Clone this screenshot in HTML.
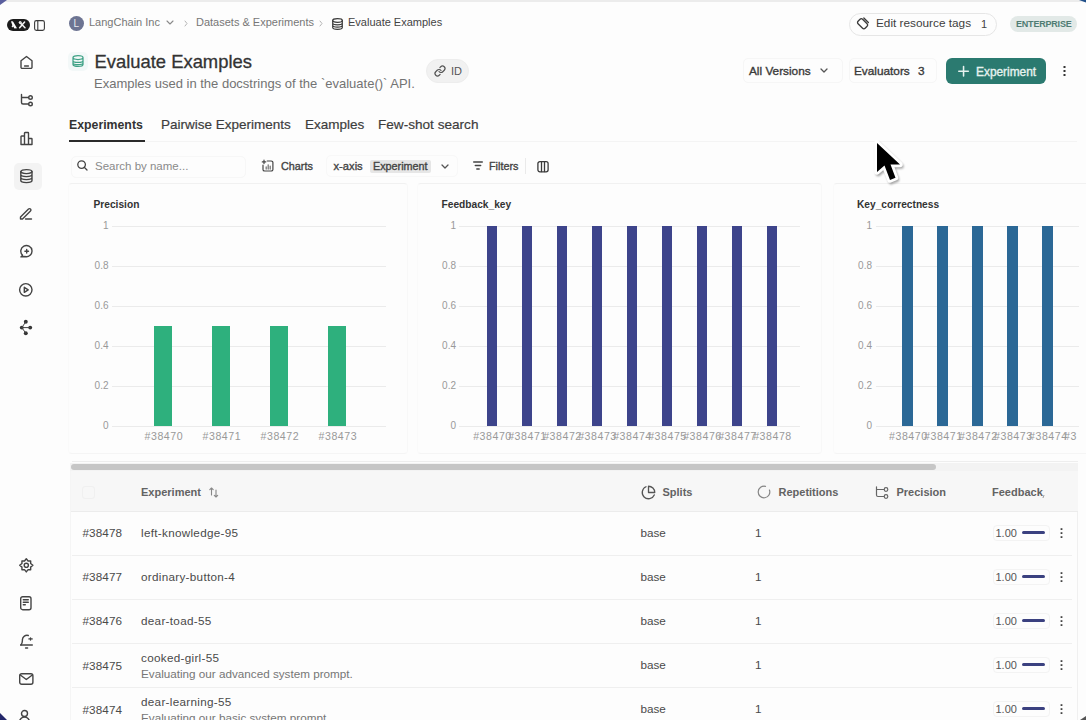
<!DOCTYPE html>
<html><head><meta charset="utf-8">
<style>
*{box-sizing:border-box;margin:0;padding:0}
html,body{width:1086px;height:720px;overflow:hidden;background:#fdfdfd;font-family:"Liberation Sans",sans-serif;color:#2b2b2b}
.a{position:absolute}
.t{position:absolute;white-space:nowrap;line-height:1}
svg{position:absolute;overflow:visible}
.ic{fill:none;stroke-linecap:round;stroke-linejoin:round}
</style></head><body>
<!-- frame -->
<div class="a" style="left:0;top:0;width:1086px;height:2px;background:#ececec"></div>
<div class="a" style="left:1077px;top:512px;width:1px;height:208px;background:#f0f0f0"></div>

<!-- top left logo -->
<div class="a" style="left:7px;top:19px;width:23px;height:12px;border-radius:6px;background:#1c1c1c"></div>
<svg style="left:7px;top:19px" width="23" height="12" viewBox="0 0 23 12">
  <path d="M4 2.6 C4.6 2.2 5.6 2.3 6.2 2.7 L10 9.3 L7.4 9.5 L6.3 7.6 L5.2 8.4 L4.6 7.2 L5.4 6.3 Z" fill="#fff"/>
  <path d="M12.6 3.2 L18 8.8 M17.6 3 L12.6 8.8" stroke="#f4f4f4" stroke-width="1.5" stroke-linecap="round"/>
  <circle cx="13.3" cy="3.6" r="1.1" fill="none" stroke="#f4f4f4" stroke-width="1"/>
</svg>
<svg style="left:34px;top:19.5px" width="11" height="11" viewBox="0 0 11 11">
  <rect x="0.6" y="0.6" width="9.8" height="9.8" rx="1.8" class="ic" stroke="#3a3a3a" stroke-width="1.1"/>
  <line x1="3.8" y1="1" x2="3.8" y2="10" class="ic" stroke="#3a3a3a" stroke-width="1.1"/>
</svg>

<!-- breadcrumb -->
<div class="a" style="left:69px;top:15.8px;width:15px;height:15px;border-radius:50%;background:#6d7492"></div>
<div class="t" style="left:73.5px;top:19px;font-size:10px;color:#e8e8f0;">L</div>
<div class="t" style="left:89px;top:17.2px;font-size:11px;color:#777">LangChain Inc</div>
<svg style="left:166px;top:20px" width="8" height="5" viewBox="0 0 8 5"><path d="M1 1 L4 4 L7 1" class="ic" stroke="#8a8a8a" stroke-width="1.1"/></svg>
<svg style="left:184px;top:20px" width="4" height="7" viewBox="0 0 4 7"><path d="M1 1 L3 3.5 L1 6" class="ic" stroke="#b5b5b5" stroke-width="1"/></svg>
<div class="t" style="left:196px;top:17.2px;font-size:11px;color:#777">Datasets &amp; Experiments</div>
<svg style="left:319px;top:20px" width="4" height="7" viewBox="0 0 4 7"><path d="M1 1 L3 3.5 L1 6" class="ic" stroke="#b5b5b5" stroke-width="1"/></svg>
<svg style="left:332px;top:17.5px" width="11" height="12" viewBox="0 0 11 12">
  <ellipse cx="5.5" cy="2.5" rx="4.8" ry="1.8" class="ic" stroke="#3a3a3a" stroke-width="1.2"/>
  <path d="M0.7 2.5 V9.5 C0.7 10.5 2.8 11.3 5.5 11.3 C8.2 11.3 10.3 10.5 10.3 9.5 V2.5 M0.7 5 C0.7 6 2.8 6.8 5.5 6.8 C8.2 6.8 10.3 6 10.3 5 M0.7 7.3 C0.7 8.3 2.8 9.1 5.5 9.1 C8.2 9.1 10.3 8.3 10.3 7.3" class="ic" stroke="#3a3a3a" stroke-width="1.2"/>
</svg>
<div class="t" style="left:348px;top:17.2px;font-size:11px;color:#444">Evaluate Examples</div>

<!-- right header -->
<div class="a" style="left:849px;top:12.5px;width:148px;height:23px;border-radius:12px;border:1px solid #e6e6e6;background:#fdfdfd"></div>
<svg style="left:856.6px;top:16.9px" width="13" height="12" viewBox="0 0 13 12">
  <g transform="rotate(-45 6 6.5)">
    <rect x="2.3" y="1.4" width="6.4" height="10" rx="1.8" class="ic" stroke="#3a3a3a" stroke-width="1.3"/>
    <path d="M10.5 3.2 V9.6" class="ic" stroke="#3a3a3a" stroke-width="1.3"/>
  </g>
</svg>
<div class="t" style="left:876px;top:17.9px;font-size:11.8px;color:#3d3d3d">Edit resource tags</div>
<div class="t" style="left:981px;top:18.5px;font-size:11px;color:#444">1</div>
<div class="a" style="left:1010px;top:16px;width:67px;height:15.5px;border-radius:8px;background:#e2e9e7"></div>
<div class="t" style="left:1016px;top:20.3px;font-size:9px;font-weight:700;color:#4f7c73;letter-spacing:-0.2px">ENTERPRISE</div>

<!-- title -->
<div class="a" style="left:68px;top:51.5px;width:19.5px;height:19px;border-radius:5px;background:#f3f8f8"></div>
<svg style="left:72.3px;top:55.3px" width="12" height="12" viewBox="0 0 12 12">
  <path d="M1 2.6 C1 1.4 3.2 0.7 6 0.7 C8.8 0.7 11 1.4 11 2.6 V9.4 C11 10.6 8.8 11.3 6 11.3 C3.2 11.3 1 10.6 1 9.4 Z M1 2.6 C1 3.8 3.2 4.5 6 4.5 C8.8 4.5 11 3.8 11 2.6 M1 5.7 C1 6.8 3.2 7.4 6 7.4 C8.8 7.4 11 6.8 11 5.7 M1 8.1 C1 9.1 3.2 9.7 6 9.7 C8.8 9.7 11 9.1 11 8.1" fill="none" stroke="#3fa286" stroke-width="1.25"/>
</svg>
<div class="t" style="left:94.5px;top:52.7px;font-size:18.4px;color:#333;-webkit-text-stroke:0.3px #333">Evaluate Examples</div>
<div class="t" style="left:94px;top:77px;font-size:13px;color:#737373">Examples used in the docstrings of the `evaluate()` API.</div>
<div class="a" style="left:426px;top:59px;width:43px;height:24px;border-radius:12px;background:#f1f1f1;border:1px solid #ededed"></div>
<svg style="left:433.5px;top:64.5px" width="12" height="12" viewBox="0 0 24 24">
  <path d="M10 13a5 5 0 0 0 7.54.54l3-3a5 5 0 0 0-7.07-7.07l-1.72 1.71" class="ic" stroke="#555" stroke-width="2.4"/>
  <path d="M14 11a5 5 0 0 0-7.54-.54l-3 3a5 5 0 0 0 7.07 7.07l1.71-1.71" class="ic" stroke="#555" stroke-width="2.4"/>
</svg>
<div class="t" style="left:451px;top:66px;font-size:11px;color:#555">ID</div>

<!-- actions -->
<div class="a" style="left:743px;top:58px;width:100px;height:25px;border-radius:5px;border:1px solid #f6f6f6"></div>
<div class="t" style="left:749px;top:65.5px;font-size:11.8px;color:#3a3a3a;-webkit-text-stroke:0.35px #3a3a3a">All Versions</div>
<svg style="left:820px;top:68px" width="8" height="5" viewBox="0 0 8 5"><path d="M1 1 L4 4 L7 1" class="ic" stroke-width="1.3" stroke="#555"/></svg>
<div class="a" style="left:849px;top:58px;width:88px;height:25px;border-radius:5px;border:1px solid #f6f6f6"></div>
<div class="t" style="left:854px;top:65.5px;font-size:11.8px;color:#3a3a3a;-webkit-text-stroke:0.35px #3a3a3a">Evaluators</div>
<div class="t" style="left:918px;top:65.5px;font-size:11.8px;color:#3a3a3a;-webkit-text-stroke:0.35px #3a3a3a">3</div>
<div class="a" style="left:946px;top:58px;width:100px;height:25.5px;border-radius:6px;background:#2b7a70"></div>
<svg style="left:958px;top:66px" width="10" height="10" viewBox="0 0 9 9"><path d="M5 0.5 V9 M0.7 4.75 H9.3" stroke="#e6f2ef" stroke-width="1.4" stroke-linecap="round"/></svg>
<div class="t" style="left:976px;top:66.5px;font-size:11.9px;color:#e6f2ef;-webkit-text-stroke:0.35px #e6f2ef">Experiment</div>
<svg style="left:1063px;top:66px" width="3" height="11" viewBox="0 0 3 11"><rect x="0.5" y="0" width="2" height="2" fill="#333"/><rect x="0.5" y="4" width="2" height="2" fill="#333"/><rect x="0.5" y="8" width="2" height="2" fill="#333"/></svg>

<!-- tabs -->
<div class="t" style="left:69px;top:118.8px;font-size:12.3px;font-weight:700;color:#333">Experiments</div>
<div class="a" style="left:145px;top:141px;width:932px;height:1px;background:#f4f4f4"></div>
<div class="a" style="left:69px;top:140px;width:76px;height:2px;background:#2b2b2b"></div>
<div class="t" style="left:161px;top:118.3px;font-size:13.5px;color:#3d3d3d;-webkit-text-stroke:0.2px #3d3d3d">Pairwise Experiments</div>
<div class="t" style="left:305px;top:118.3px;font-size:13.5px;color:#3d3d3d;-webkit-text-stroke:0.2px #3d3d3d">Examples</div>
<div class="t" style="left:378px;top:118.3px;font-size:13.6px;color:#3d3d3d;-webkit-text-stroke:0.2px #3d3d3d">Few-shot search</div>

<!-- toolbar -->
<div class="a" style="left:71px;top:155.5px;width:175px;height:22px;border-radius:5px;border:1px solid #f7f7f7"></div>
<svg style="left:77px;top:160px" width="11" height="11" viewBox="0 0 11 11"><circle cx="4.6" cy="4.6" r="3.8" class="ic" stroke="#444" stroke-width="1.3"/><path d="M7.5 7.5 L10 10" class="ic" stroke="#444" stroke-width="1.3"/></svg>
<div class="t" style="left:95px;top:161px;font-size:11.5px;color:#8a8a8a">Search by name...</div>
<svg style="left:261.5px;top:160.3px" width="12" height="12" viewBox="0 0 12 12">
  <path d="M5.2 1 H9.3 A1.6 1.6 0 0 1 10.9 2.6 V9.4 A1.6 1.6 0 0 1 9.3 11 H2.6 A1.6 1.6 0 0 1 1 9.4 V5.2" class="ic" stroke="#444" stroke-width="1.2"/>
  <path d="M2 0.2 V3.6 M0.3 1.9 H3.7" class="ic" stroke="#444" stroke-width="1.2"/>
  <path d="M4.2 9 V7 M6.2 9 V4.8 M8.2 9 V6.2" class="ic" stroke="#777" stroke-width="1.3"/>
</svg>
<div class="t" style="left:281px;top:161px;font-size:10.8px;color:#444;-webkit-text-stroke:0.35px #444">Charts</div>
<div class="a" style="left:326px;top:155px;width:132px;height:22px;border-radius:5px;border:1px solid #f8f8f8"></div>
<div class="t" style="left:333.5px;top:161px;font-size:11.2px;color:#444;-webkit-text-stroke:0.35px #444">x-axis</div>
<div class="a" style="left:370px;top:159.5px;width:61px;height:13px;border-radius:2px;background:#e6e6e6"></div>
<div class="t" style="left:373px;top:161px;font-size:10.8px;color:#444;-webkit-text-stroke:0.35px #444">Experiment</div>
<svg style="left:441px;top:164px" width="8" height="5" viewBox="0 0 8 5"><path d="M1 1 L4 4 L7 1" class="ic" stroke-width="1.3" stroke="#555"/></svg>
<svg style="left:473px;top:161px" width="10" height="9" viewBox="0 0 10 9"><path d="M0.7 1 H9.3 M2.3 4.5 H7.7 M3.8 8 H6.2" class="ic" stroke="#444" stroke-width="1.4"/></svg>
<div class="t" style="left:489px;top:161px;font-size:10.8px;color:#444;-webkit-text-stroke:0.35px #444">Filters</div>
<div class="a" style="left:525px;top:158px;width:1px;height:16px;background:#eaeaea"></div>
<svg style="left:536.5px;top:160.5px" width="12" height="11" viewBox="0 0 12 11"><rect x="0.9" y="0.6" width="10.2" height="10.2" rx="2" class="ic" stroke="#3a3a3a" stroke-width="1.3"/><path d="M4.5 1 V10.5 M7.5 1 V10.5" class="ic" stroke="#3a3a3a" stroke-width="1.3"/></svg>

<!-- CHARTS -->
<div class="a" style="left:68px;top:183px;width:340px;height:271px;border:1px solid #f1f1f1;border-left-color:#fafafa;border-right-color:#f8f8f8;border-bottom-color:#f5f5f5;border-radius:4px"></div>
<div class="t" style="left:93.5px;top:199.8px;font-size:10.2px;font-weight:700;color:#333">Precision</div>
<div class="a" style="left:112px;top:225.5px;width:274px;height:1px;background:#ebebeb"></div>
<div class="t" style="right:977.5px;top:221px;font-size:10px;color:#999">1</div>
<div class="a" style="left:112px;top:265.5px;width:274px;height:1px;background:#ebebeb"></div>
<div class="t" style="right:977.5px;top:261px;font-size:10px;color:#999">0.8</div>
<div class="a" style="left:112px;top:305.5px;width:274px;height:1px;background:#ebebeb"></div>
<div class="t" style="right:977.5px;top:301px;font-size:10px;color:#999">0.6</div>
<div class="a" style="left:112px;top:345.5px;width:274px;height:1px;background:#ebebeb"></div>
<div class="t" style="right:977.5px;top:341px;font-size:10px;color:#999">0.4</div>
<div class="a" style="left:112px;top:385.5px;width:274px;height:1px;background:#ebebeb"></div>
<div class="t" style="right:977.5px;top:381px;font-size:10px;color:#999">0.2</div>
<div class="a" style="left:112px;top:425.5px;width:274px;height:1px;background:#ebebeb"></div>
<div class="t" style="right:977.5px;top:421px;font-size:10px;color:#999">0</div>
<div class="a" style="left:154px;top:326.0px;width:18px;height:100.0px;background:#2eb07d"></div>
<div class="a" style="left:212px;top:326.0px;width:18px;height:100.0px;background:#2eb07d"></div>
<div class="a" style="left:270px;top:326.0px;width:18px;height:100.0px;background:#2eb07d"></div>
<div class="a" style="left:328px;top:326.0px;width:18px;height:100.0px;background:#2eb07d"></div>
<div class="t" style="left:144.5px;top:430.8px;font-size:10.6px;color:#999;letter-spacing:0.55px">#38470</div>
<div class="t" style="left:202.5px;top:430.8px;font-size:10.6px;color:#999;letter-spacing:0.55px">#38471</div>
<div class="t" style="left:260.5px;top:430.8px;font-size:10.6px;color:#999;letter-spacing:0.55px">#38472</div>
<div class="t" style="left:318.5px;top:430.8px;font-size:10.6px;color:#999;letter-spacing:0.55px">#38473</div>
<div class="a" style="left:417px;top:183px;width:405px;height:271px;border:1px solid #f1f1f1;border-left-color:#fafafa;border-right-color:#f8f8f8;border-bottom-color:#f5f5f5;border-radius:4px"></div>
<div class="t" style="left:441.5px;top:199.8px;font-size:10.2px;font-weight:700;color:#333">Feedback_key</div>
<div class="a" style="left:459px;top:225.5px;width:341px;height:1px;background:#ebebeb"></div>
<div class="t" style="right:630px;top:221px;font-size:10px;color:#999">1</div>
<div class="a" style="left:459px;top:265.5px;width:341px;height:1px;background:#ebebeb"></div>
<div class="t" style="right:630px;top:261px;font-size:10px;color:#999">0.8</div>
<div class="a" style="left:459px;top:305.5px;width:341px;height:1px;background:#ebebeb"></div>
<div class="t" style="right:630px;top:301px;font-size:10px;color:#999">0.6</div>
<div class="a" style="left:459px;top:345.5px;width:341px;height:1px;background:#ebebeb"></div>
<div class="t" style="right:630px;top:341px;font-size:10px;color:#999">0.4</div>
<div class="a" style="left:459px;top:385.5px;width:341px;height:1px;background:#ebebeb"></div>
<div class="t" style="right:630px;top:381px;font-size:10px;color:#999">0.2</div>
<div class="a" style="left:459px;top:425.5px;width:341px;height:1px;background:#ebebeb"></div>
<div class="t" style="right:630px;top:421px;font-size:10px;color:#999">0</div>
<div class="a" style="left:486.5px;top:226.0px;width:10.3px;height:200.0px;background:#3d448b"></div>
<div class="a" style="left:521.5px;top:226.0px;width:10.3px;height:200.0px;background:#3d448b"></div>
<div class="a" style="left:556.5px;top:226.0px;width:10.3px;height:200.0px;background:#3d448b"></div>
<div class="a" style="left:591.5px;top:226.0px;width:10.3px;height:200.0px;background:#3d448b"></div>
<div class="a" style="left:626.5px;top:226.0px;width:10.3px;height:200.0px;background:#3d448b"></div>
<div class="a" style="left:661.5px;top:226.0px;width:10.3px;height:200.0px;background:#3d448b"></div>
<div class="a" style="left:696.5px;top:226.0px;width:10.3px;height:200.0px;background:#3d448b"></div>
<div class="a" style="left:731.5px;top:226.0px;width:10.3px;height:200.0px;background:#3d448b"></div>
<div class="a" style="left:766.5px;top:226.0px;width:10.3px;height:200.0px;background:#3d448b"></div>
<div class="t" style="left:473.15px;top:430.8px;font-size:10.6px;color:#999;letter-spacing:0.55px">#38470</div>
<div class="t" style="left:508.15px;top:430.8px;font-size:10.6px;color:#999;letter-spacing:0.55px">#38471</div>
<div class="t" style="left:543.15px;top:430.8px;font-size:10.6px;color:#999;letter-spacing:0.55px">#38472</div>
<div class="t" style="left:578.15px;top:430.8px;font-size:10.6px;color:#999;letter-spacing:0.55px">#38473</div>
<div class="t" style="left:613.15px;top:430.8px;font-size:10.6px;color:#999;letter-spacing:0.55px">#38474</div>
<div class="t" style="left:648.15px;top:430.8px;font-size:10.6px;color:#999;letter-spacing:0.55px">#38475</div>
<div class="t" style="left:683.15px;top:430.8px;font-size:10.6px;color:#999;letter-spacing:0.55px">#38476</div>
<div class="t" style="left:718.15px;top:430.8px;font-size:10.6px;color:#999;letter-spacing:0.55px">#38477</div>
<div class="t" style="left:753.15px;top:430.8px;font-size:10.6px;color:#999;letter-spacing:0.55px">#38478</div>
<div class="a" style="left:833px;top:183px;width:267px;height:271px;border:1px solid #f1f1f1;border-left-color:#fafafa;border-right-color:#f8f8f8;border-bottom-color:#f5f5f5;border-radius:4px"></div>
<div class="t" style="left:857px;top:199.8px;font-size:10.2px;font-weight:700;color:#333">Key_correctness</div>
<div class="a" style="left:876px;top:225.5px;width:203px;height:1px;background:#ebebeb"></div>
<div class="t" style="right:214px;top:221px;font-size:10px;color:#999">1</div>
<div class="a" style="left:876px;top:265.5px;width:203px;height:1px;background:#ebebeb"></div>
<div class="t" style="right:214px;top:261px;font-size:10px;color:#999">0.8</div>
<div class="a" style="left:876px;top:305.5px;width:203px;height:1px;background:#ebebeb"></div>
<div class="t" style="right:214px;top:301px;font-size:10px;color:#999">0.6</div>
<div class="a" style="left:876px;top:345.5px;width:203px;height:1px;background:#ebebeb"></div>
<div class="t" style="right:214px;top:341px;font-size:10px;color:#999">0.4</div>
<div class="a" style="left:876px;top:385.5px;width:203px;height:1px;background:#ebebeb"></div>
<div class="t" style="right:214px;top:381px;font-size:10px;color:#999">0.2</div>
<div class="a" style="left:876px;top:425.5px;width:203px;height:1px;background:#ebebeb"></div>
<div class="t" style="right:214px;top:421px;font-size:10px;color:#999">0</div>
<div class="a" style="left:902.4px;top:226.0px;width:10.2px;height:200.0px;background:#2b6896"></div>
<div class="a" style="left:937.4px;top:226.0px;width:10.2px;height:200.0px;background:#2b6896"></div>
<div class="a" style="left:972.4px;top:226.0px;width:10.2px;height:200.0px;background:#2b6896"></div>
<div class="a" style="left:1007.4px;top:226.0px;width:10.2px;height:200.0px;background:#2b6896"></div>
<div class="a" style="left:1042.4px;top:226.0px;width:10.2px;height:200.0px;background:#2b6896"></div>
<div class="t" style="left:889.0px;top:430.8px;font-size:10.6px;color:#999;letter-spacing:0.55px">#38470</div>
<div class="t" style="left:924.0px;top:430.8px;font-size:10.6px;color:#999;letter-spacing:0.55px">#38471</div>
<div class="t" style="left:959.0px;top:430.8px;font-size:10.6px;color:#999;letter-spacing:0.55px">#38472</div>
<div class="t" style="left:994.0px;top:430.8px;font-size:10.6px;color:#999;letter-spacing:0.55px">#38473</div>
<div class="t" style="left:1029.0px;top:430.8px;font-size:10.6px;color:#999;letter-spacing:0.55px">#38474</div>
<div class="t" style="left:1064.0px;top:430.8px;font-size:10.6px;color:#999;letter-spacing:0.55px">#3</div>

<!-- sidebar -->
<div class="a" style="left:14px;top:163px;width:28px;height:26.5px;border-radius:5px;background:#f3f3f3"></div>
<svg style="left:19.7px;top:56.3px" width="14" height="14" viewBox="0 0 14 14"><path d="M1 4.8 L6.5 0.5 L12 4.8 V11.2 A1.2 1.2 0 0 1 10.8 12.4 H2.2 A1.2 1.2 0 0 1 1 11.2 Z" class="ic" stroke="#444" stroke-width="1.4"/><path d="M4.6 10 H8.4" class="ic" stroke="#444" stroke-width="1.4"/></svg>
<svg style="left:19.7px;top:94.2px" width="14" height="14" viewBox="0 0 14 14"><path d="M1.5 0.5 V8.5 A1.5 1.5 0 0 0 3 10 H8.5 M1.5 3.5 H8.5" class="ic" stroke="#444" stroke-width="1.4"/><circle cx="10.5" cy="3.5" r="1.8" class="ic" stroke="#444" stroke-width="1.4"/><circle cx="10.5" cy="10" r="1.8" class="ic" stroke="#444" stroke-width="1.4"/></svg>
<svg style="left:19.9px;top:132px" width="14" height="14" viewBox="0 0 14 14"><path d="M1 12.5 V4.5 A0.5 0.5 0 0 1 1.5 4 H4.5 V1 A0.5 0.5 0 0 1 5 0.5 H8 A0.5 0.5 0 0 1 8.5 1 V6.5 H11.5 A0.5 0.5 0 0 1 12 7 V12.5 Z M4.5 4 V12.5 M8.5 6.5 V12.5" class="ic" stroke="#444" stroke-width="1.4"/></svg>
<svg style="left:19.8px;top:169.3px" width="14" height="15" viewBox="0 0 14 15"><ellipse cx="6.4" cy="2.6" rx="5.6" ry="2" class="ic" stroke="#444" stroke-width="1.4"/><path d="M0.8 2.6 V11.6 C0.8 12.7 3.3 13.6 6.4 13.6 C9.5 13.6 12 12.7 12 11.6 V2.6 M0.8 5.6 C0.8 6.7 3.3 7.6 6.4 7.6 C9.5 7.6 12 6.7 12 5.6 M0.8 8.6 C0.8 9.7 3.3 10.6 6.4 10.6 C9.5 10.6 12 9.7 12 8.6" class="ic" stroke="#444" stroke-width="1.4"/></svg>
<svg style="left:19.3px;top:206.8px" width="14" height="14" viewBox="0 0 14 14"><path d="M1.5 10 L9.5 2 A1.4 1.4 0 0 1 11.5 4 L3.5 12 H1.5 Z" class="ic" stroke="#444" stroke-width="1.4"/><path d="M6.5 12 H12.5" class="ic" stroke="#444" stroke-width="1.4"/></svg>
<svg style="left:19.7px;top:245px" width="14" height="14" viewBox="0 0 14 14"><path d="M2.6 10.2 A5.6 5.6 0 1 1 5 11.5 L0.9 11.9 Z" class="ic" stroke="#444" stroke-width="1.4"/><path d="M6.7 4.5 V8.1 M4.9 6.3 H8.5" class="ic" stroke="#444" stroke-width="1.4"/></svg>
<svg style="left:19.3px;top:283.3px" width="14" height="14" viewBox="0 0 14 14"><circle cx="6.8" cy="6.8" r="6.2" class="ic" stroke="#444" stroke-width="1.4"/><path d="M5.3 4.3 L9.2 6.8 L5.3 9.3 Z" class="ic" stroke="#444" stroke-width="1.4"/></svg>
<svg style="left:20.4px;top:320px" width="13" height="15" viewBox="0 0 13 15"><circle cx="5.8" cy="1.8" r="1.95" fill="#333"/><circle cx="1.8" cy="7.6" r="1.95" fill="#333"/><circle cx="10.2" cy="7.6" r="1.95" fill="#333"/><circle cx="5.8" cy="13.2" r="1.95" fill="#333"/><path d="M5.8 1.8 L1.8 7.6 L5.8 13.2 M1.8 7.6 H10.2" class="ic" stroke="#444" stroke-width="1"/></svg>
<svg style="left:19px;top:558px" width="15" height="15" viewBox="0 0 15 15"><path d="M7.30 0.70 L9.10 2.96 L11.68 2.92 L11.64 5.50 L13.90 7.30 L11.64 9.10 L11.68 11.68 L9.10 11.64 L7.30 13.90 L5.50 11.64 L2.92 11.68 L2.96 9.10 L0.70 7.30 L2.96 5.50 L2.92 2.92 L5.50 2.96 Z" class="ic" stroke="#444" stroke-width="1.4"/><circle cx="7.3" cy="7.3" r="2.1" class="ic" stroke="#444" stroke-width="1.4"/></svg>
<svg style="left:20.4px;top:596px" width="12" height="15" viewBox="0 0 12 15"><rect x="0.7" y="0.7" width="10.3" height="13" rx="2" class="ic" stroke="#444" stroke-width="1.4"/><path d="M3.3 3.7 H8.3 M3.3 6.2 H8.3 M3.3 8.7 H5.3" class="ic" stroke="#444" stroke-width="1.4"/></svg>
<svg style="left:19.9px;top:633.5px" width="14" height="15" viewBox="0 0 14 15"><path d="M0.9 11 C2 9.8 2.4 8.2 2.4 6.6 V5.6 A4.6 4.6 0 0 1 8.3 1.5" class="ic" stroke="#444" stroke-width="1.4"/><path d="M0.7 11 H12.3" class="ic" stroke="#444" stroke-width="1.4"/><path d="M8.9 4.9 H12.2 M10.5 3.9 V6" class="ic" stroke="#444" stroke-width="1.4"/><path d="M5.6 14 H7.6" class="ic" stroke="#444" stroke-width="1.4"/></svg>
<svg style="left:19px;top:673.2px" width="15" height="12" viewBox="0 0 15 12"><rect x="0.7" y="0.7" width="13.2" height="10.6" rx="2" class="ic" stroke="#444" stroke-width="1.4"/><path d="M1.3 2 L7.3 6.5 L13.3 2" class="ic" stroke="#444" stroke-width="1.4"/></svg>
<svg style="left:19px;top:709.5px" width="12" height="12" viewBox="0 0 12 12"><circle cx="5.5" cy="3.5" r="3" class="ic" stroke="#444" stroke-width="1.4"/><path d="M0.5 12 A5 5 0 0 1 10.5 12" class="ic" stroke="#444" stroke-width="1.4"/></svg>

<!-- table -->
<div class="a" style="left:72px;top:461px;width:1006px;height:1px;background:#eeeeee"></div>
<div class="a" style="left:70px;top:463px;width:1008px;height:8px;background:#f3f3f3"></div>
<div class="a" style="left:71px;top:464px;width:865px;height:5.5px;border-radius:3px;background:#c6c6c6"></div>
<div class="a" style="left:70px;top:471px;width:1008px;height:40px;background:#f7f7f7"></div>
<div class="a" style="left:70px;top:511px;width:1008px;height:1px;background:#ececec"></div>
<div class="a" style="left:70px;top:471px;width:1px;height:260px;background:#f5f5f5"></div>
<div class="a" style="left:82px;top:486px;width:13px;height:13px;border-radius:3px;border:1px solid #f0f0f0;background:#f7f7f7"></div>
<div class="t" style="left:141px;top:487px;font-size:11px;font-weight:700;color:#636363">Experiment</div>
<svg style="left:209px;top:486.5px" width="10" height="11" viewBox="0 0 10 11"><path d="M2.5 8 V1 M0.8 2.7 L2.5 1 L4.2 2.7 M7 3 V10 M5.3 8.3 L7 10 L8.7 8.3" class="ic" stroke="#888" stroke-width="1.1"/></svg>
<svg style="left:640.5px;top:485px" width="15" height="15" viewBox="0 0 24 24"><path d="M21.21 15.89A10 10 0 1 1 8 2.83" class="ic" stroke="#555" stroke-width="2.1"/><path d="M22 12A10 10 0 0 0 12 2v10z" class="ic" stroke="#555" stroke-width="2.1"/></svg>
<div class="t" style="left:662.5px;top:487px;font-size:11px;font-weight:700;color:#636363">Splits</div>
<svg style="left:757px;top:485px" width="14" height="14" viewBox="0 0 14 14"><path d="M8.50 1.40 A5.8 5.8 0 1 0 12.45 5.02" class="ic" stroke="#858585" stroke-width="1.2"/></svg>
<div class="t" style="left:778.5px;top:487px;font-size:11px;font-weight:700;color:#636363">Repetitions</div>
<svg style="left:875px;top:485.5px" width="14" height="14" viewBox="0 0 14 14"><path d="M1.5 0.8 V9 A1.5 1.5 0 0 0 3 10.5 H9 M1.5 3.5 H9" class="ic" stroke="#666" stroke-width="1.2"/><circle cx="11" cy="3.5" r="1.8" class="ic" stroke="#666" stroke-width="1.2"/><circle cx="11" cy="10.5" r="1.8" class="ic" stroke="#666" stroke-width="1.2"/></svg>
<div class="t" style="left:896.5px;top:487px;font-size:11px;font-weight:700;color:#636363">Precision</div>
<div class="t" style="left:992px;top:487px;font-size:11px;font-weight:700;color:#636363">Feedback</div>
<div class="a" style="left:1043px;top:494.5px;width:1.2px;height:3px;background:#999;transform:skewX(-20deg)"></div>
<div class="t" style="left:82.5px;top:527px;font-size:11.7px;color:#4a4a4a;letter-spacing:0.1px">#38478</div>
<div class="t" style="left:141px;top:527px;font-size:11.7px;color:#4a4a4a;letter-spacing:0.3px">left-knowledge-95</div>
<div class="t" style="left:640.5px;top:527px;font-size:11.7px;color:#4a4a4a">base</div>
<div class="t" style="left:755px;top:527px;font-size:11.7px;color:#4a4a4a">1</div>
<div class="a" style="left:992.5px;top:524.5px;width:57px;height:16.5px;border-radius:4px;border:1px solid #f3f3f3"></div>
<div class="t" style="left:995.5px;top:528px;font-size:11px;color:#555">1.00</div>
<div class="a" style="left:1022px;top:531px;width:23px;height:3.4px;border-radius:1.7px;background:#3b4180"></div>
<svg style="left:1059.5px;top:528px" width="3" height="11" viewBox="0 0 3 11"><rect x="0.6" y="0.2" width="1.8" height="1.8" fill="#444"/><rect x="0.6" y="4.2" width="1.8" height="1.8" fill="#444"/><rect x="0.6" y="8.2" width="1.8" height="1.8" fill="#444"/></svg>
<div class="a" style="left:72px;top:554.5px;width:1000px;height:1px;background:#efefef"></div>
<div class="t" style="left:82.5px;top:571px;font-size:11.7px;color:#4a4a4a;letter-spacing:0.1px">#38477</div>
<div class="t" style="left:141px;top:571px;font-size:11.7px;color:#4a4a4a;letter-spacing:0.3px">ordinary-button-4</div>
<div class="t" style="left:640.5px;top:571px;font-size:11.7px;color:#4a4a4a">base</div>
<div class="t" style="left:755px;top:571px;font-size:11.7px;color:#4a4a4a">1</div>
<div class="a" style="left:992.5px;top:568.5px;width:57px;height:16.5px;border-radius:4px;border:1px solid #f3f3f3"></div>
<div class="t" style="left:995.5px;top:572px;font-size:11px;color:#555">1.00</div>
<div class="a" style="left:1022px;top:575px;width:23px;height:3.4px;border-radius:1.7px;background:#3b4180"></div>
<svg style="left:1059.5px;top:572px" width="3" height="11" viewBox="0 0 3 11"><rect x="0.6" y="0.2" width="1.8" height="1.8" fill="#444"/><rect x="0.6" y="4.2" width="1.8" height="1.8" fill="#444"/><rect x="0.6" y="8.2" width="1.8" height="1.8" fill="#444"/></svg>
<div class="a" style="left:72px;top:598.5px;width:1000px;height:1px;background:#efefef"></div>
<div class="t" style="left:82.5px;top:615px;font-size:11.7px;color:#4a4a4a;letter-spacing:0.1px">#38476</div>
<div class="t" style="left:141px;top:615px;font-size:11.7px;color:#4a4a4a;letter-spacing:0.3px">dear-toad-55</div>
<div class="t" style="left:640.5px;top:615px;font-size:11.7px;color:#4a4a4a">base</div>
<div class="t" style="left:755px;top:615px;font-size:11.7px;color:#4a4a4a">1</div>
<div class="a" style="left:992.5px;top:612.5px;width:57px;height:16.5px;border-radius:4px;border:1px solid #f3f3f3"></div>
<div class="t" style="left:995.5px;top:616px;font-size:11px;color:#555">1.00</div>
<div class="a" style="left:1022px;top:619px;width:23px;height:3.4px;border-radius:1.7px;background:#3b4180"></div>
<svg style="left:1059.5px;top:616px" width="3" height="11" viewBox="0 0 3 11"><rect x="0.6" y="0.2" width="1.8" height="1.8" fill="#444"/><rect x="0.6" y="4.2" width="1.8" height="1.8" fill="#444"/><rect x="0.6" y="8.2" width="1.8" height="1.8" fill="#444"/></svg>
<div class="a" style="left:72px;top:642.5px;width:1000px;height:1px;background:#efefef"></div>
<div class="t" style="left:82.5px;top:660px;font-size:11.7px;color:#4a4a4a;letter-spacing:0.1px">#38475</div>
<div class="t" style="left:141px;top:652px;font-size:11.7px;color:#4a4a4a;letter-spacing:0.3px">cooked-girl-55</div>
<div class="t" style="left:141px;top:668px;font-size:11.7px;color:#767676">Evaluating our advanced system prompt.</div>
<div class="t" style="left:640.5px;top:659px;font-size:11.7px;color:#4a4a4a">base</div>
<div class="t" style="left:755px;top:659px;font-size:11.7px;color:#4a4a4a">1</div>
<div class="a" style="left:992.5px;top:656.5px;width:57px;height:16.5px;border-radius:4px;border:1px solid #f3f3f3"></div>
<div class="t" style="left:995.5px;top:660px;font-size:11px;color:#555">1.00</div>
<div class="a" style="left:1022px;top:663px;width:23px;height:3.4px;border-radius:1.7px;background:#3b4180"></div>
<svg style="left:1059.5px;top:660px" width="3" height="11" viewBox="0 0 3 11"><rect x="0.6" y="0.2" width="1.8" height="1.8" fill="#444"/><rect x="0.6" y="4.2" width="1.8" height="1.8" fill="#444"/><rect x="0.6" y="8.2" width="1.8" height="1.8" fill="#444"/></svg>
<div class="a" style="left:72px;top:686.5px;width:1000px;height:1px;background:#efefef"></div>
<div class="t" style="left:82.5px;top:704px;font-size:11.7px;color:#4a4a4a;letter-spacing:0.1px">#38474</div>
<div class="t" style="left:141px;top:696px;font-size:11.7px;color:#4a4a4a;letter-spacing:0.3px">dear-learning-55</div>
<div class="t" style="left:141px;top:712px;font-size:11.7px;color:#767676">Evaluating our basic system prompt.</div>
<div class="t" style="left:640.5px;top:703px;font-size:11.7px;color:#4a4a4a">base</div>
<div class="t" style="left:755px;top:703px;font-size:11.7px;color:#4a4a4a">1</div>
<div class="a" style="left:992.5px;top:700.5px;width:57px;height:16.5px;border-radius:4px;border:1px solid #f3f3f3"></div>
<div class="t" style="left:995.5px;top:704px;font-size:11px;color:#555">1.00</div>
<div class="a" style="left:1022px;top:707px;width:23px;height:3.4px;border-radius:1.7px;background:#3b4180"></div>
<svg style="left:1059.5px;top:704px" width="3" height="11" viewBox="0 0 3 11"><rect x="0.6" y="0.2" width="1.8" height="1.8" fill="#444"/><rect x="0.6" y="4.2" width="1.8" height="1.8" fill="#444"/><rect x="0.6" y="8.2" width="1.8" height="1.8" fill="#444"/></svg>
<svg style="left:870px;top:138px" width="40" height="52" viewBox="0 0 40 52">
<defs><filter id="sh" x="-50%" y="-50%" width="200%" height="200%"><feGaussianBlur stdDeviation="1.3"/></filter></defs>
<path d="M7 5 V34 L14.5 27.5 L20 42 L25.5 39.8 L20.5 26.5 H30 Z" fill="#000" stroke="#000" stroke-width="5" stroke-linejoin="round" opacity="0.35" filter="url(#sh)" transform="translate(1.2,1.8)"/>
<path d="M7 5 V34 L14.5 27.5 L20 42 L25.5 39.8 L20.5 26.5 H30 Z" fill="#000" stroke="#fff" stroke-width="5.5" stroke-linejoin="round"/>
<path d="M7 5 V34 L14.5 27.5 L20 42 L25.5 39.8 L20.5 26.5 H30 Z" fill="#000"/>
</svg>

<svg style="left:0;top:0" width="8" height="6" viewBox="0 0 8 6"><path d="M0 0 H7 L0 5 Z" fill="#5a5f9e"/></svg>
<svg style="left:1079px;top:0" width="7" height="3" viewBox="0 0 7 3"><path d="M0 0 H7 V2.5 Z" fill="#1f4f8a"/></svg>
<svg style="left:0;top:713px" width="8" height="7" viewBox="0 0 8 7"><path d="M0 0 L7 7 H0 Z" fill="#23276a"/></svg>
<svg style="left:1080px;top:716px" width="6" height="4" viewBox="0 0 6 4"><path d="M6 0 V4 H0 Z" fill="#555"/></svg>
</body></html>
